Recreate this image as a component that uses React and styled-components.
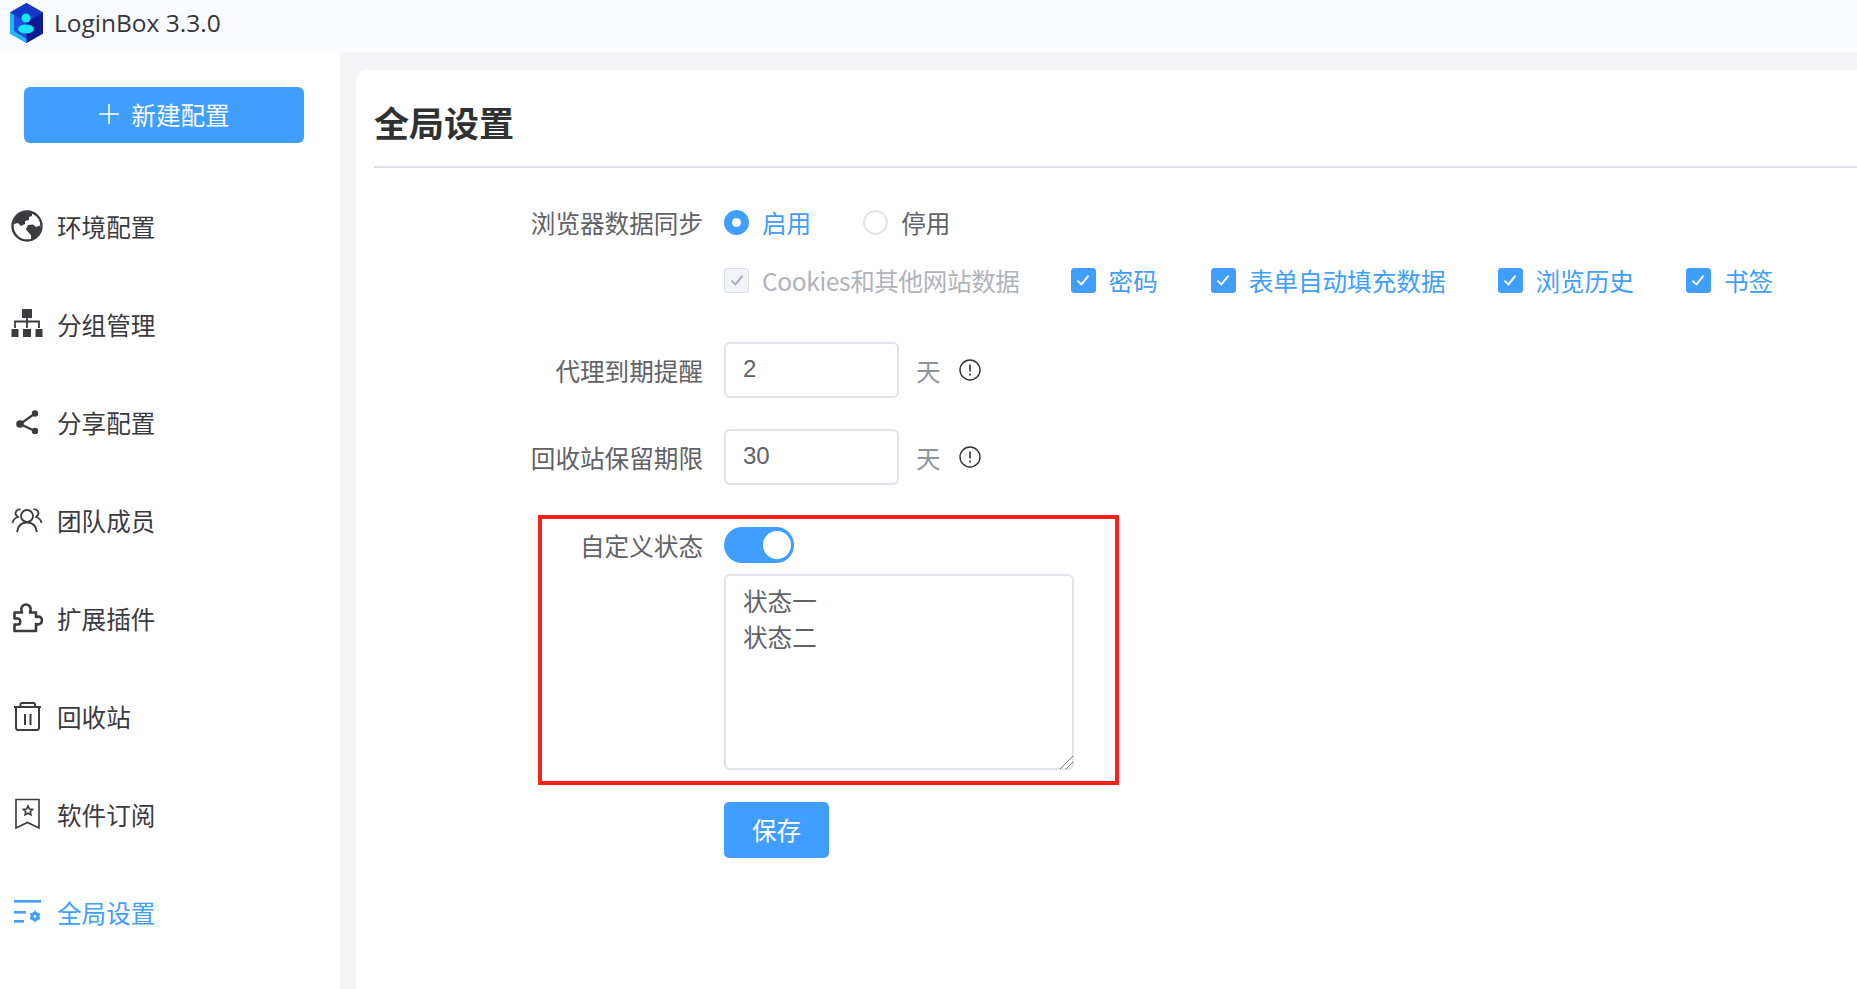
import React from "react";
import styled, { createGlobalStyle } from "styled-components";

const blue = "#409eff";
const FONT = `"Noto Sans CJK SC", "Noto Sans", sans-serif`;

const GlobalStyle = createGlobalStyle`
  html, body { margin: 0; padding: 0; height: 100%; overflow: hidden; background: #f4f4f7; }
  #root { height: 100%; }
  * { box-sizing: border-box; }
  body { font-family: ${FONT}; }
`;

const Page = styled.div`
  display: flex;
  flex-direction: column;
  height: 989px;
  width: 1857px;
  overflow: hidden;
`;

const TopBar = styled.header`
  display: flex;
  align-items: center;
  height: 52px;
  padding: 0 0 0 8px;
  background: #fbfcff;
  gap: 9px;
  flex-shrink: 0;
`;

const AppName = styled.span`
  font-family: "Open Sans", "Noto Sans", sans-serif;
  font-size: 24.5px;
  color: #35363c;
  margin-top: -7px;
`;

const Logo = styled.svg`
  width: 37px;
  height: 42px;
  margin-top: -7px;
`;

const Body = styled.div`
  display: flex;
  flex: 1;
  min-height: 0;
`;

const Sidebar = styled.aside`
  width: 340px;
  background: #fff;
  padding: 35px 0 0 0;
  flex-shrink: 0;
`;

const NewButton = styled.button`
  display: flex;
  align-items: center;
  justify-content: center;
  gap: 11px;
  width: 280px;
  height: 56px;
  margin-left: 24px;
  margin-bottom: 34px;
  padding-bottom: 3px;
  border: none;
  border-radius: 6px;
  background: ${blue};
  color: #fff;
  font-family: ${FONT};
  font-size: 24.6px;
`;

const NavItem = styled.div`
  display: flex;
  align-items: center;
  height: 98px;
  padding-left: 11px;
  gap: 14px;
  font-size: 24.6px;
  color: ${(p) => (p.$active ? blue : "#3a3a3f")};
`;

const NavIcon = styled.svg`
  width: 32px;
  height: 32px;
  flex-shrink: 0;
`;

const Gutter = styled.main`
  flex: 1;
  padding: 18px 0 0 16px;
  background: #f4f4f7;
  min-width: 0;
`;

const Panel = styled.section`
  background: #fff;
  border-top-left-radius: 10px;
  height: 100%;
  padding: 0 0 0 18px;
`;

const Title = styled.h1`
  margin: 0;
  height: 98px;
  display: flex;
  align-items: center;
  padding-top: 7px;
  font-size: 35px;
  font-weight: 700;
  color: #303133;
  border-bottom: 2px solid #dfdfe8;
`;

const Form = styled.div`
  display: flex;
  flex-direction: column;
  padding-top: 26px;
`;

const Row = styled.div`
  display: flex;
  align-items: center;
  height: ${(p) => p.$h}px;
  margin-bottom: ${(p) => p.$mb || 0}px;
`;

const Label = styled.div`
  width: 350px;
  flex-shrink: 0;
  text-align: right;
  padding-right: 21px;
  font-size: 24.6px;
  color: #606266;
`;

const Options = styled.div`
  display: flex;
  align-items: center;
`;

const Radio = styled.span`
  width: 25px;
  height: 25px;
  border-radius: 50%;
  flex-shrink: 0;
  background: #fff;
  border: ${(p) => (p.$on ? `8px solid ${blue}` : "2px solid #e2e3ea")};
`;

const OptionText = styled.span`
  font-size: 24.6px;
  color: ${(p) => (p.$muted ? "#b0b3ba" : p.$on ? blue : "#606266")};
  letter-spacing: ${(p) => (p.$muted ? "-0.4px" : "0")};
  margin-left: 13px;
  margin-right: ${(p) => p.$mr || 0}px;
  white-space: nowrap;
`;

const Check = styled.span`
  display: flex;
  align-items: center;
  justify-content: center;
  flex-shrink: 0;
  width: 25px;
  height: 25px;
  border-radius: 3px;
  background: ${(p) => (p.$disabled ? "#f2f3f8" : blue)};
  border: 1.5px solid ${(p) => (p.$disabled ? "#dcdfe6" : blue)};
  color: ${(p) => (p.$disabled ? "#a8abb2" : "#fff")};
`;

const NumberBox = styled.div`
  width: 175px;
  height: 56px;
  border: 2px solid #e2e3ea;
  border-radius: 6px;
  padding-left: 17px;
  padding-bottom: 2px;
  display: flex;
  align-items: center;
  font-family: "Liberation Sans", Arial, sans-serif;
  font-size: 24px;
  color: #606266;
`;

const Unit = styled.span`
  font-size: 24.6px;
  color: #909399;
  margin-left: 17px;
`;

const InfoIcon = styled.svg`
  width: 24px;
  height: 24px;
  margin-left: 17px;
  color: #303133;
`;

const Highlight = styled.div`
  width: 581px;
  height: 270px;
  margin-left: 164px;
  margin-bottom: 17px;
  border: 4px solid #ff1f14;
  padding: 8px 0 0 0;
`;

const HighlightRow = styled.div`
  display: flex;
`;

const HighlightLabel = styled.div`
  width: 182px;
  flex-shrink: 0;
  text-align: right;
  padding-right: 21px;
  font-size: 24.6px;
  color: #606266;
  line-height: 36px;
`;

const HighlightColumn = styled.div`
  display: flex;
  flex-direction: column;
  gap: 11px;
`;

const Toggle = styled.div`
  position: relative;
  width: 70px;
  height: 36px;
  border-radius: 18px;
  background: ${blue};
`;

const Knob = styled.span`
  position: absolute;
  top: 4px;
  right: 3px;
  width: 28px;
  height: 28px;
  border-radius: 50%;
  background: #fff;
`;

const TextArea = styled.div`
  position: relative;
  width: 350px;
  height: 196px;
  border: 2px solid #e2e3ea;
  border-radius: 6px;
  padding: 6px 17px;
  font-size: 24.6px;
  line-height: 36px;
  color: #606266;
`;

const ResizeGrip = styled.svg`
  position: absolute;
  right: -2px;
  bottom: -2px;
  width: 16px;
  height: 16px;
  color: #555;
`;

const SaveButton = styled.button`
  width: 105px;
  height: 56px;
  margin-left: 350px;
  padding-bottom: 4px;
  border: none;
  border-radius: 5px;
  background: ${blue};
  color: #fff;
  font-family: ${FONT};
  font-size: 24.6px;
`;

const Tick = () => (
  <svg width="20" height="20" viewBox="0 0 18 18" fill="none" stroke="currentColor" strokeWidth="1.7">
    <path d="M4 9.5 L7.6 13 L14 5" />
  </svg>
);

const Info = () => (
  <InfoIcon viewBox="0 0 24 24" fill="none" stroke="currentColor" strokeWidth="1.4">
    <circle cx="12" cy="12" r="10" />
    <path d="M12 6.5 V13.5" strokeWidth="1.6" />
    <path d="M12 15.6 V17.4" strokeWidth="1.6" />
  </InfoIcon>
);

const icons = {
  globe: (
    <>
      <circle cx="16" cy="16" r="14.5" fill="none" stroke="#3a3a3f" strokeWidth="2.4" />
      <path d="M8 4 C12 2 18 2 21 3.500 L21 6 L18 7 L18 10 L14 11 L14 14 L10 16 L7 13 L3 14 C3 10 5 6 8 4Z" fill="#3a3a3f" />
      <path d="M17 15 L22 14.500 L25 17 L29 15.500 C30 20 28 26 22 29 L20 29 L20 25 L17 22 L15 19 Z" fill="#3a3a3f" />
    </>
  ),
  tree: (
    <>
      <rect x="11" y="1" width="10" height="9" fill="#3a3a3f" />
      <path d="M16 10 V20 M4 20 V13.500 H28 V20" fill="none" stroke="#3a3a3f" strokeWidth="1.800" />
      <rect x="0.500" y="21" width="7" height="8" fill="#3a3a3f" />
      <rect x="12" y="21" width="8" height="8" fill="#3a3a3f" />
      <rect x="24.500" y="21" width="7" height="8" fill="#3a3a3f" />
    </>
  ),
  share: (
    <>
      <path d="M24 7.500 L9 18 L24 25" fill="none" stroke="#3a3a3f" strokeWidth="2.200" />
      <circle cx="24" cy="7.500" r="3.200" fill="#3a3a3f" />
      <circle cx="9" cy="18" r="3.800" fill="#3a3a3f" />
      <circle cx="24" cy="25" r="3.200" fill="#3a3a3f" />
    </>
  ),
  team: (
    <g fill="none" stroke="#3a3a3f" strokeWidth="1.800">
      <circle cx="16" cy="12" r="6" />
      <path d="M6 28 C7 21 11 18.500 16 18.500 C21 18.500 25 21 26 28" />
      <path d="M9.500 5.500 C6 5 3.500 8 5 11 L7 13 C4 14 2 16 1.500 19" />
      <path d="M22.500 5.500 C26 5 28.500 8 27 11 L25 13 C28 14 30 16 30.500 19" />
    </g>
  ),
  puzzle: (
    <path
      d="M3.500 29 V22.500 H7 C10 22.500 10 16.500 7 16.500 H3.500 V10.500 H11 C9 5 12 2.500 15 2.500 C18 2.500 21 5 19 10.500 H25 V15 C30 13.500 31 17 31 18.500 C31 20.500 29 23.500 25 22 V29 Z"
      fill="none"
      stroke="#3a3a3f"
      strokeWidth="2.600"
      strokeLinejoin="round"
    />
  ),
  trash: (
    <g fill="none" stroke="#3a3a3f" strokeWidth="2">
      <path d="M3 7 H30" />
      <path d="M9.500 7 V4.500 C9.500 3.500 10 3 11 3 H22.500 C23.500 3 24 3.500 24 4.500 V7" />
      <path d="M5 7 V27.500 C5 29 6 30 7.500 30 H25.500 C27 30 28 29 28 27.500 V7" />
      <path d="M14 14 V25 M19.500 14 V25" />
    </g>
  ),
  bookmark: (
    <g fill="none" stroke="#3a3a3f" strokeWidth="1.600">
      <path d="M5 1.500 H28 V30 L16.500 24.500 L5 30 Z" />
      <path d="M17 8 L18.400 11 L21.600 11.400 L19.300 13.600 L19.900 16.800 L17 15.200 L14.100 16.800 L14.700 13.600 L12.400 11.400 L15.600 11 Z" />
    </g>
  ),
  settings: (
    <g fill={blue}>
      <rect x="3" y="4" width="27" height="2.600" />
      <rect x="3" y="15" width="12" height="2.600" />
      <rect x="3" y="24" width="10" height="2.600" />
      <path d="M24 14 L29.500 23.600 H18.500 Z" />
      <path d="M24 26.800 L18.500 17.200 H29.500 Z" />
      <circle cx="24" cy="20.400" r="4.600" />
      <circle cx="24" cy="20.400" r="1.400" fill="#fff" />
    </g>
  ),
};

const nav = [
  ["globe", "环境配置"],
  ["tree", "分组管理"],
  ["share", "分享配置"],
  ["team", "团队成员"],
  ["puzzle", "扩展插件"],
  ["trash", "回收站"],
  ["bookmark", "软件订阅"],
  ["settings", "全局设置", true],
];

const syncOptions = [
  ["密码", 53],
  ["表单自动填充数据", 52],
  ["浏览历史", 52],
  ["书签", 0],
];

export default function App() {
  return (
    <Page>
      <GlobalStyle />
      <TopBar>
        <Logo viewBox="0 0 37 42">
          <path d="M18.500 1 L35 10.500 V31.500 L18.500 41 L2 31.500 V10.500 Z" fill="#1f4fe0" />
          <path d="M18.500 1 L35 10.500 L18.500 20 L2 10.500 Z" fill="#1537c8" />
          <path d="M35 10.500 V31.500 L18.500 41 V20 Z" fill="#0c1a96" />
          <path d="M2 10.500 V31.500 L18.500 41 V37 L6 29 V13 Z" fill="#22b4f5" />
          <circle cx="18" cy="16" r="4.500" fill="#14e6f5" />
          <ellipse cx="18" cy="27" rx="8" ry="4.500" fill="#14e6f5" />
        </Logo>
        <AppName>LoginBox 3.3.0</AppName>
      </TopBar>
      <Body>
        <Sidebar>
          <NewButton>
            <svg width="22" height="22" viewBox="0 0 22 22" stroke="#fff" strokeWidth="1.600">
              <path d="M11 1 V21 M1 11 H21" />
            </svg>
            新建配置
          </NewButton>
          {nav.map(([icon, label, active]) => (
            <NavItem key={label} $active={active}>
              <NavIcon viewBox="0 0 32 32">{icons[icon]}</NavIcon>
              {label}
            </NavItem>
          ))}
        </Sidebar>
        <Gutter>
          <Panel>
            <Title>全局设置</Title>
            <Form>
              <Row $h={56}>
                <Label>浏览器数据同步</Label>
                <Options>
                  <Radio $on />
                  <OptionText $on $mr={52}>启用</OptionText>
                  <Radio />
                  <OptionText>停用</OptionText>
                </Options>
              </Row>
              <Row $h={60} $mb={32}>
                <Label />
                <Options>
                  <Check $disabled><Tick /></Check>
                  <OptionText $muted $mr={51}>Cookies和其他网站数据</OptionText>
                  {syncOptions.map(([text, gap]) => (
                    <React.Fragment key={text}>
                      <Check><Tick /></Check>
                      <OptionText $on $mr={gap}>{text}</OptionText>
                    </React.Fragment>
                  ))}
                </Options>
              </Row>
              <Row $h={56} $mb={31}>
                <Label>代理到期提醒</Label>
                <NumberBox>2</NumberBox>
                <Unit>天</Unit>
                <Info />
              </Row>
              <Row $h={56} $mb={30}>
                <Label>回收站保留期限</Label>
                <NumberBox>30</NumberBox>
                <Unit>天</Unit>
                <Info />
              </Row>
              <Highlight>
                <HighlightRow>
                  <HighlightLabel>自定义状态</HighlightLabel>
                  <HighlightColumn>
                    <Toggle><Knob /></Toggle>
                    <TextArea>
                      状态一
                      <br />
                      状态二
                      <ResizeGrip viewBox="0 0 16 16" fill="none" stroke="currentColor" strokeWidth="0.800">
                        <path d="M2 15 L15 2 M8 15 L15 8" />
                      </ResizeGrip>
                    </TextArea>
                  </HighlightColumn>
                </HighlightRow>
              </Highlight>
              <SaveButton>保存</SaveButton>
            </Form>
          </Panel>
        </Gutter>
      </Body>
    </Page>
  );
}
